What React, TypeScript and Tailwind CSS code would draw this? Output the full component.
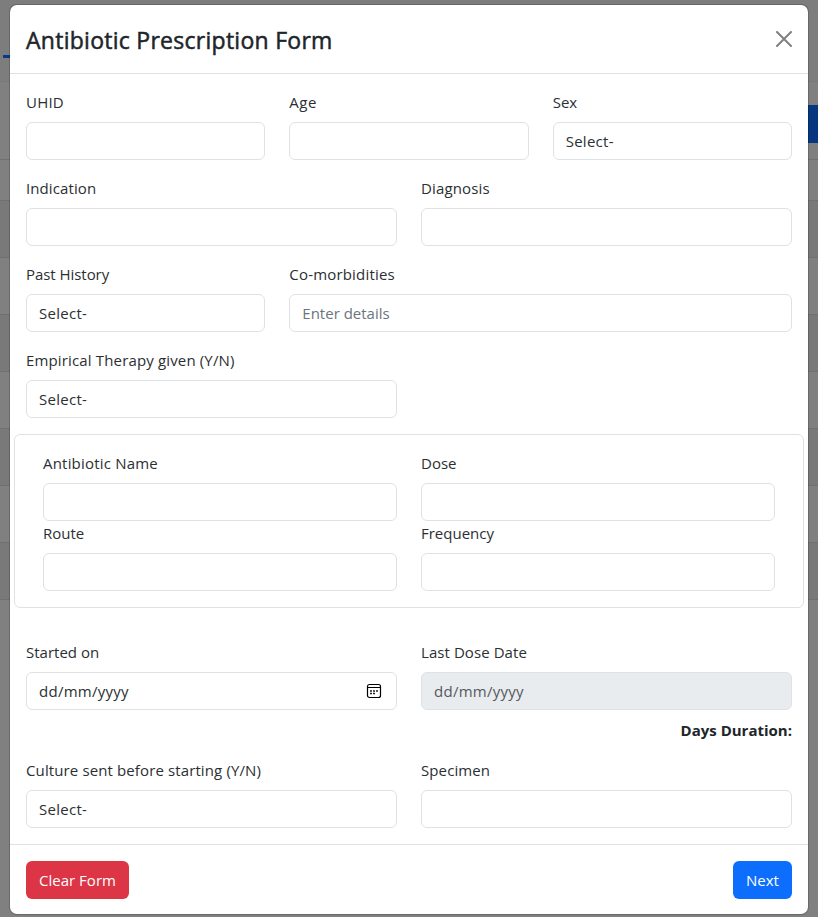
import type { ReactNode } from 'react';

function Field({ label, fit = '', value, tone = '', icon, className = '' }: {
  label: string; fit?: string; value?: string; tone?: string; icon?: ReactNode; className?: string;
}) {
  return (
    <div className={className}>
      <div className={`mb-2 h-6 whitespace-nowrap ${fit}`}>{label}</div>
      <div className={`flex h-[38px] items-center justify-between rounded-md border border-[#dee2e6] pl-3 pr-[14px] ${tone}`}>
        <span className={value === 'Enter details' ? '' : 'tracking-[0.27px]'}>{value}</span>
        {icon}
      </div>
    </div>
  );
}

function CalendarIcon() {
  return (
    <svg width="16" height="16" viewBox="0 0 16 16" fill="none" stroke="#000">
      <rect x="1.5" y="1.5" width="13" height="13" rx="2" strokeWidth="1.2" />
      <path d="M1.5 4.5h13" />
      <path d="M7 8h2M10 8h2M4 10.5h2M7 10.5h2M10 10.5h0M4 8h2" strokeWidth="1.5" stroke="#222" />
    </svg>
  );
}

function Backdrop() {
  return (
    <div className="flex h-full flex-col bg-[#808080]">
      <div className="flex h-[82px] flex-col border-b border-[#797979] bg-[#7d7d7d] pl-[3px] pt-[55px]">
        <div className="h-[3px] w-10 bg-[#063b8c]" />
      </div>
      <div className="flex h-[78px] justify-end border-b border-[#717171] pt-[23px]">
        <div className="h-[38px] w-16 bg-[#06367f]" />
      </div>
      <div className="h-[41px] border-b border-[#707070]" />
      {[0, 1, 2, 3, 4, 5, 6].map((i) => (
        <div key={i} className={`h-[57px] border-b border-[#707070] ${i % 2 === 0 ? 'bg-[#797979]' : 'bg-[#808080]'}`} />
      ))}
    </div>
  );
}

export default function App() {
  return (
    <div className="relative h-[917px] w-[818px] overflow-hidden font-['Open_Sans','Noto_Sans',sans-serif] text-[15px] leading-6 text-[#2b2f33]">
      <Backdrop />
      <div className="absolute left-[9px] top-1 w-[800px] rounded-lg border border-black/[.175] bg-white bg-clip-padding">
        <header className="flex h-[69px] items-center justify-between border-b border-[#dee2e6] px-4">
          <h5 className="mt-0.5 text-[23px] leading-9 tracking-[0.27px] text-[#212529] [-webkit-text-stroke:0.5px_#212529]">Antibiotic Prescription Form</h5>
          <svg width="16" height="16" viewBox="0 0 16 16" stroke="#808080" strokeWidth="2" strokeLinecap="round">
            <path d="M1 1l14 14M15 1L1 15" />
          </svg>
        </header>
        <main className="flex flex-col px-4 pb-4 pt-4">
          <div className="mb-4 grid grid-cols-3 gap-x-6">
            <Field label="UHID" fit="tracking-[0.2px]" />
            <Field label="Age" fit="tracking-[0.5px]" />
            <Field label="Sex" value="Select-" />
          </div>
          <div className="mb-4 grid grid-cols-2 gap-x-6">
            <Field label="Indication" fit="tracking-[0.1px]" />
            <Field label="Diagnosis" fit="tracking-[0.15px]" />
          </div>
          <div className="mb-4 grid grid-cols-3 gap-x-6">
            <Field label="Past History" value="Select-" fit="tracking-[-0.05px]" />
            <Field label="Co-morbidities" value="Enter details" tone="text-[#6c757d]" className="col-span-2" fit="tracking-[0.18px]" />
          </div>
          <div className="mb-4 grid grid-cols-2 gap-x-6">
            <Field label="Empirical Therapy given (Y/N)" value="Select-" fit="tracking-[0.15px]" />
          </div>
          <section className="-mx-3 mb-8 grid grid-cols-2 gap-x-6 rounded-md border border-[#dee2e6] px-7 py-4">
            <Field label="Antibiotic Name" fit="tracking-[0.2px]" />
            <Field label="Dose" />
            <Field label="Route" />
            <Field label="Frequency" />
          </section>
          <div className="grid grid-cols-2 gap-x-6">
            <Field label="Started on" value="dd/mm/yyyy" icon={<CalendarIcon />} />
            <Field label="Last Dose Date" value="dd/mm/yyyy" tone="bg-[#e9ecef] text-[#54595e]" fit="tracking-[0.07px]" />
          </div>
          <div className="mb-4 mt-2 text-right font-bold text-[#212529]">Days Duration:</div>
          <div className="grid grid-cols-2 gap-x-6">
            <Field label="Culture sent before starting (Y/N)" value="Select-" fit="tracking-[0.12px]" />
            <Field label="Specimen" fit="tracking-[0.1px]" />
          </div>
        </main>
        <footer className="flex h-[70px] items-center justify-between border-t border-[#dee2e6] px-4 pt-px">
          <button className="h-[38px] w-[103px] rounded-md bg-[#dc3545] text-white">Clear Form</button>
          <button className="h-[38px] w-[59px] rounded-md bg-[#0d6efd] text-white">Next</button>
        </footer>
      </div>
    </div>
  );
}
